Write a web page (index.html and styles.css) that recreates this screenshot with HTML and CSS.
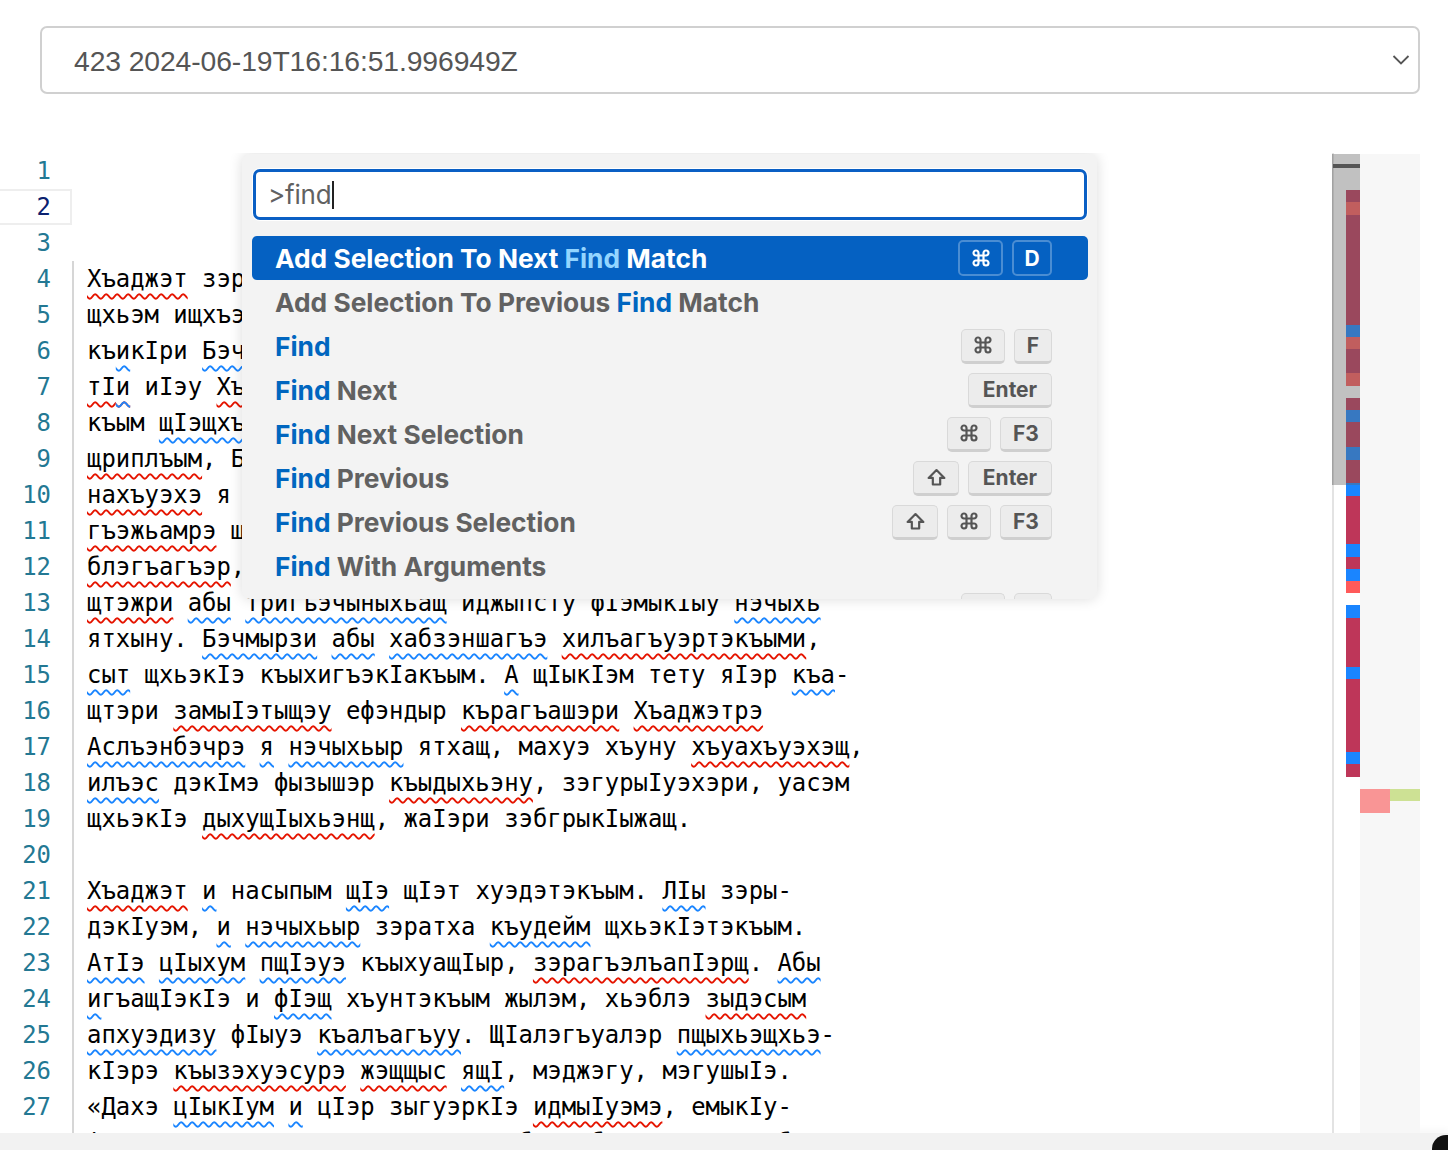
FILE: index.html
```html
<!DOCTYPE html>
<html lang="kbd">
<head>
<meta charset="utf-8">
<title>Editor</title>
<link rel="stylesheet" href="styles.css">
</head>
<body>
<div class="top">
  <div class="select">
    <span class="select-text">423 2024-06-19T16:16:51.996949Z</span>
    <svg class="chev" width="18" height="12" viewBox="0 0 18 12"><path d="M1.5 2 L9 9.5 L16.5 2" fill="none" stroke="#555" stroke-width="1.8"/></svg>
  </div>
</div>
<div class="workspace">
  <div class="editor">
    <div class="lines">
      <div class="row"><div class="ln">1</div><div class="code"></div></div>
      <div class="row cur"><div class="ln">2</div><div class="code"></div></div>
      <div class="row"><div class="ln">3</div><div class="code"></div></div>
      <div class="row"><div class="ln">4</div><div class="code g"><span class="r">Хъаджэт</span> зэрыхуэзэну щыта щIалэр Бэчмырзэ и къуэщ,</div></div>
      <div class="row"><div class="ln">5</div><div class="code g">щхьэм ищхъэрэу къэнат, ауэ Iуэхур зэпыуа хъуакъым.</div></div>
      <div class="row"><div class="ln">6</div><div class="code g">къ<span class="b">и</span>кIри <span class="b">Бэчмырзэ</span> и унэм щызэхуэсахэщ, жэщым</div></div>
      <div class="row"><div class="ln">7</div><div class="code g"><span class="r">тI<span class="b">и</span></span> иIэу <span class="r">Хъаджэт</span> и адэм и деж кIуахэщ. Абы</div></div>
      <div class="row"><div class="ln">8</div><div class="code g">къым <span class="b">щIэщхъуэрт</span>, ауэ зыри жимыIэу едаIуэрт.</div></div>
      <div class="row"><div class="ln">9</div><div class="code g"><span class="r">щриплъым</span>, Бэчмырзэ и гуращэр къыгуригъэIуащ,</div></div>
      <div class="row"><div class="ln">10</div><div class="code g"><span class="r">нахъуэхэ</span> я псалъэр зэтемыхуэу, ауэ унафэр</div></div>
      <div class="row"><div class="ln">11</div><div class="code g"><span class="r">гъэжьамрэ</span> щIалэмрэ я зэхуаку дэлъыр ягъэбыдэу</div></div>
      <div class="row"><div class="ln">12</div><div class="code g"><span class="r">блэгъагъэр</span>, жэщ-махуэ имыIэу Iуэхур ягъэкIуэтэн</div></div>
      <div class="row"><div class="ln">13</div><div class="code g"><span class="r">щтэжри</span> <span class="b">абы</span> <span class="b">тригъэчыныхьащ</span> иджыпсту фIэмыкIыу <span class="b">нэчыхь</span></div></div>
      <div class="row"><div class="ln">14</div><div class="code g">ятхыну. <span class="b">Бэчмырзи</span> <span class="b">абы</span> <span class="b">хабзэншагъэ</span> <span class="r">хилъагъуэртэкъыми</span>,</div></div>
      <div class="row"><div class="ln">15</div><div class="code g"><span class="b">сыт</span> щхьэкIэ къыхигъэкIакъым. <span class="b">А</span> щIыкIэм тету яIэр <span class="b">къа</span>-</div></div>
      <div class="row"><div class="ln">16</div><div class="code g">щтэри <span class="r">замыIэтыщэу</span> ефэндыр <span class="r">кърагъашэри</span> <span class="r">Хъаджэтрэ</span></div></div>
      <div class="row"><div class="ln">17</div><div class="code g"><span class="b">Аслъэнбэчрэ</span> <span class="b">я</span> <span class="b">нэчыхьыр</span> ятхащ, махуэ хъуну <span class="r">хъуахъуэхэщ</span>,</div></div>
      <div class="row"><div class="ln">18</div><div class="code g"><span class="b">илъэс</span> дэкIмэ фызышэр <span class="r">къыдыхьэну</span>, зэгурыIуэхэри, уасэм</div></div>
      <div class="row"><div class="ln">19</div><div class="code g">щхьэкIэ <span class="r">дыхущIыхьэнщ</span>, жаIэри зэбгрыкIыжащ.</div></div>
      <div class="row"><div class="ln">20</div><div class="code g"></div></div>
      <div class="row"><div class="ln">21</div><div class="code g"><span class="r">Хъаджэт</span> <span class="b">и</span> насыпым <span class="b">щIэ</span> щIэт хуэдэтэкъым. <span class="b">ЛIы</span> зэры-</div></div>
      <div class="row"><div class="ln">22</div><div class="code g">дэкIуэм, <span class="b">и</span> <span class="b">нэчыхьыр</span> зэратха <span class="b">къудейм</span> щхьэкIэтэкъым.</div></div>
      <div class="row"><div class="ln">23</div><div class="code g"><span class="b">АтIэ</span> <span class="b">цIыхум</span> <span class="b">пщIэуэ</span> къыхуащIыр, <span class="r">зэрагъэлъапIэрщ</span>. <span class="b">Абы</span></div></div>
      <div class="row"><div class="ln">24</div><div class="code g"><span class="b">и</span>гъащIэкIэ и <span class="b">фIэщ</span> хъунтэкъым жылэм, хьэблэ <span class="r">зыдэсым</span></div></div>
      <div class="row"><div class="ln">25</div><div class="code g"><span class="b">апхуэдизу</span> фIыуэ <span class="b">къалъагъуу</span>. ЩIалэгъуалэр <span class="b">пщыхьэщхьэ</span>-</div></div>
      <div class="row"><div class="ln">26</div><div class="code g">кIэрэ <span class="r">къызэхуэсурэ</span> <span class="r">жэщщыс</span> <span class="b">ящI</span>, мэджэгу, мэгушыIэ.</div></div>
      <div class="row"><div class="ln">27</div><div class="code g">«Дахэ <span class="b">цIыкIум</span> <span class="b">и</span> цIэр зыгуэркIэ <span class="r">идмыIуэмэ</span>, емыкIу-</div></div>
      <div class="row"><div class="ln">28</div><div class="code g">фIэкIа зыри жамыIэу щытащ, хьэблэр бгъэдэсу игъэбзэрт.</div></div>
    </div>

    <div class="scrollbar">
      <div class="marker crimson" style="top:37px;height:12px"></div>
      <div class="marker red" style="top:49px;height:13px"></div>
      <div class="marker crimson" style="top:62px;height:110px"></div>
      <div class="marker blue" style="top:172px;height:12px"></div>
      <div class="marker red" style="top:184px;height:12px"></div>
      <div class="marker crimson" style="top:196px;height:24px"></div>
      <div class="marker red" style="top:220px;height:13px"></div>
      <div class="marker crimson" style="top:245px;height:12px"></div>
      <div class="marker blue" style="top:257px;height:12px"></div>
      <div class="marker crimson" style="top:269px;height:25px"></div>
      <div class="marker blue" style="top:294px;height:13px"></div>
      <div class="marker crimson" style="top:307px;height:23px"></div>
      <div class="marker blue" style="top:330px;height:13px"></div>
      <div class="marker crimson" style="top:343px;height:48px"></div>
      <div class="marker blue" style="top:391px;height:13px"></div>
      <div class="marker crimson" style="top:404px;height:12px"></div>
      <div class="marker blue" style="top:416px;height:12px"></div>
      <div class="marker red" style="top:428px;height:12px"></div>
      <div class="marker blue" style="top:452px;height:13px"></div>
      <div class="marker crimson" style="top:465px;height:49px"></div>
      <div class="marker blue" style="top:514px;height:12px"></div>
      <div class="marker crimson" style="top:526px;height:73px"></div>
      <div class="marker blue" style="top:599px;height:12px"></div>
      <div class="marker crimson" style="top:611px;height:13px"></div>
      <div class="slider"><div class="cursor-mark"></div></div>
    </div>

    <div class="palette">
      <div class="quick-input">
        <span class="qi-text">&gt;find</span><span class="caret"></span>
      </div>
      <div class="list">
        <div class="item sel">
          <span class="label">Add Selection To Next <em>Find</em> Match</span>
          <span class="keys"><kbd class="k-cmd"><svg class="ic" viewBox="0 0 24 24"><path d="M9 9V6a3 3 0 1 0-3 3h3M15 9V6a3 3 0 1 1 3 3h-3M15 15v3a3 3 0 1 0 3-3h-3M9 15v3a3 3 0 1 1-3-3h3M9 9h6v6H9z"/></svg></kbd><kbd class="k-d">D</kbd></span>
        </div>
        <div class="item">
          <span class="label">Add Selection To Previous <em>Find</em> Match</span>
        </div>
        <div class="item">
          <span class="label"><em>Find</em></span>
          <span class="keys"><kbd class="k-cmd"><svg class="ic" viewBox="0 0 24 24"><path d="M9 9V6a3 3 0 1 0-3 3h3M15 9V6a3 3 0 1 1 3 3h-3M15 15v3a3 3 0 1 0 3-3h-3M9 15v3a3 3 0 1 1-3-3h3M9 9h6v6H9z"/></svg></kbd><kbd class="k-f">F</kbd></span>
        </div>
        <div class="item">
          <span class="label"><em>Find</em> Next</span>
          <span class="keys"><kbd class="k-enter">Enter</kbd></span>
        </div>
        <div class="item">
          <span class="label"><em>Find</em> Next Selection</span>
          <span class="keys"><kbd class="k-cmd"><svg class="ic" viewBox="0 0 24 24"><path d="M9 9V6a3 3 0 1 0-3 3h3M15 9V6a3 3 0 1 1 3 3h-3M15 15v3a3 3 0 1 0 3-3h-3M9 15v3a3 3 0 1 1-3-3h3M9 9h6v6H9z"/></svg></kbd><kbd class="k-f3">F3</kbd></span>
        </div>
        <div class="item">
          <span class="label"><em>Find</em> Previous</span>
          <span class="keys"><kbd class="k-shift"><svg class="ic" viewBox="0 0 24 24"><path d="M12 3.5L21 12.5H16.2V20H7.8V12.5H3Z"/></svg></kbd><kbd class="k-enter">Enter</kbd></span>
        </div>
        <div class="item">
          <span class="label"><em>Find</em> Previous Selection</span>
          <span class="keys"><kbd class="k-shift"><svg class="ic" viewBox="0 0 24 24"><path d="M12 3.5L21 12.5H16.2V20H7.8V12.5H3Z"/></svg></kbd><kbd class="k-cmd"><svg class="ic" viewBox="0 0 24 24"><path d="M9 9V6a3 3 0 1 0-3 3h3M15 9V6a3 3 0 1 1 3 3h-3M15 15v3a3 3 0 1 0 3-3h-3M9 15v3a3 3 0 1 1-3-3h3M9 9h6v6H9z"/></svg></kbd><kbd class="k-f3">F3</kbd></span>
        </div>
        <div class="item">
          <span class="label"><em>Find</em> With Arguments</span>
        </div>
        <div class="item">
          <span class="label"><em>Find</em> With Selection</span>
          <span class="keys"><kbd class="k-cmd"><svg class="ic" viewBox="0 0 24 24"><path d="M9 9V6a3 3 0 1 0-3 3h3M15 9V6a3 3 0 1 1 3 3h-3M15 15v3a3 3 0 1 0 3-3h-3M9 15v3a3 3 0 1 1-3-3h3M9 9h6v6H9z"/></svg></kbd><kbd class="k-f">E</kbd></span>
        </div>
      </div>
    </div>
  </div>
  <div class="side">
    <div class="deco pink"></div>
    <div class="deco green"></div>
  </div>
</div>
<div class="bottom"><div class="corner"></div></div>
</body>
</html>
```

FILE: styles.css
```css
html, body {
  margin: 0;
  padding: 0;
  background: #ffffff;
}
body {
  width: 1448px;
  height: 1150px;
  overflow: hidden;
  font-family: "Liberation Sans", Arial, sans-serif;
}

/* top select */
.top {
  padding: 26px 28px 0 40px;
  height: 153px;
  box-sizing: border-box;
}
.select {
  height: 68px;
  box-sizing: border-box;
  border: 2px solid #d0d0d0;
  border-radius: 7px;
  display: flex;
  align-items: center;
  justify-content: space-between;
  padding: 0 8px 0 32px;
  background: #fff;
}
.select-text {
  font-family: "Liberation Sans", Arial, sans-serif;
  font-size: 28.3px;
  color: #555;
  letter-spacing: -0.1px;
  margin-top: 2px;
}
.chev { display: block; }

/* workspace */
.workspace {
  display: flex;
  height: 980px;
  margin-right: 28px;
}
.editor {
  position: relative;
  flex: 1;
  overflow: hidden;
  background: #fff;
}
.lines {
  display: flex;
  flex-direction: column;
}
.row {
  display: flex;
  height: 36px;
  flex: none;
}
.ln {
  width: 72px;
  box-sizing: border-box;
  padding-right: 21px;
  text-align: right;
  font-family: "DejaVu Sans Mono", monospace;
  font-size: 23.9px;
  line-height: 36px;
  color: #237893;
}
.row.cur .ln {
  color: #0b216f;
  border: 2px solid #eeeeee;
  border-left: none;
  line-height: 32px;
  padding-right: 19px;
}
.code {
  flex: 1;
  padding-left: 15px;
  font-family: "DejaVu Sans Mono", monospace;
  font-size: 23.9px;
  line-height: 36px;
  color: #000;
  white-space: pre;
}
.code.g {
  border-left: 2px solid #d6d6d6;
  padding-left: 13px;
}
.r, .b {
  text-decoration-line: underline;
  text-decoration-style: wavy;
  text-decoration-thickness: 1.5px;
  text-underline-offset: 6px;
  text-decoration-skip-ink: none;
}
.r { text-decoration-color: #e51400; }
.b { text-decoration-color: #1a85ff; }

/* scrollbar / overview ruler */
.scrollbar {
  position: absolute;
  top: 0;
  right: 0;
  bottom: 0;
  width: 28px;
  box-shadow: inset 2px 0 0 #e3e3e3;
}
.marker {
  position: absolute;
  left: 14px;
  width: 14px;
}
.crimson { background: #be3659; }
.red { background: #ff5a5a; }
.blue { background: #1a85ff; }
.slider {
  position: absolute;
  top: 1px;
  left: 0;
  width: 28px;
  height: 331px;
  background: rgba(100, 100, 100, 0.4);
  box-shadow: inset 1px 0 0 rgba(0,0,0,0.08);
}
.cursor-mark {
  position: absolute;
  top: 10px;
  left: 1px;
  right: 0;
  height: 4px;
  background: #555;
}

/* side panel */
.side {
  position: relative;
  width: 60px;
  background: #f7f7f7;
  margin-top: 1px;
}
.deco { position: absolute; }
.deco.pink {
  left: 0;
  width: 30px;
  top: 635px;
  height: 24px;
  background: #f99595;
}
.deco.green {
  left: 30px;
  width: 30px;
  top: 635px;
  height: 12px;
  background: #cde194;
}

/* command palette */
.palette {
  position: absolute;
  left: 242px;
  top: 1px;
  width: 855px;
  height: 445px;
  box-sizing: border-box;
  padding: 15px 9px 0 10px;
  background: #f3f3f3;
  border-radius: 8px;
  box-shadow: 0 0 14px rgba(0, 0, 0, 0.14);
  overflow: hidden;
  font-family: Inter, "Liberation Sans", sans-serif;
}
.quick-input {
  height: 51px;
  box-sizing: border-box;
  border: 3px solid #0a5fc4;
  border-radius: 7px;
  background: #fff;
  box-shadow: 0 0 0 1px #fff;
  display: flex;
  align-items: center;
  padding-left: 12px;
  margin: 0 1px 0 1px;
}
.qi-text {
  font-size: 26px;
  color: #616161;
  letter-spacing: -0.2px;
}
.caret {
  width: 1.5px;
  height: 28px;
  background: #222;
  margin-left: 1px;
}
.list {
  margin-top: 16px;
  display: flex;
  flex-direction: column;
}
.item {
  height: 44px;
  flex: none;
  display: flex;
  align-items: center;
  justify-content: space-between;
  padding: 0 36px 0 23px;
  border-radius: 5px;
  font-weight: 700;
  font-size: 26.3px;
  color: #616161;
}
.item em {
  font-style: normal;
  color: #0066bf;
}
.item.sel {
  background: #0561c2;
  color: #fff;
}
.item.sel em {
  color: #93d5ff;
}
.keys {
  display: flex;
  gap: 9px;
}
kbd {
  font-family: Inter, "Liberation Sans", sans-serif;
  font-weight: 700;
  font-size: 21px;
  color: #555;
  height: 35px;
  box-sizing: border-box;
  padding: 0;
  display: flex;
  align-items: center;
  justify-content: center;
  background: #ececec;
  border: 1px solid #d9d9d9;
  border-bottom: 3px solid #cfcfcf;
  border-radius: 5px;
}
.ic {
  width: 20px;
  height: 20px;
  fill: none;
  stroke: currentColor;
  stroke-width: 2.6;
  stroke-linejoin: round;
  stroke-linecap: round;
  display: block;
}
kbd.k-shift .ic {
  width: 21px;
  height: 21px;
  stroke-width: 2.5;
}
kbd.k-cmd { width: 44px; }
kbd.k-shift { width: 46px; }
kbd.k-d { width: 40px; }
kbd.k-f { width: 38px; }
kbd.k-f3 { width: 52px; }
kbd.k-enter { width: 84px; }
.item.sel kbd {
  color: #fff;
  background: transparent;
  border: 2px solid rgba(255, 255, 255, 0.28);
  height: 36px;
}
.item.sel kbd.k-cmd { width: 45px; }

/* bottom strip */
.bottom {
  height: 17px;
  background: #f2f2f2;
  box-shadow: 0 -4px 6px rgba(0, 0, 0, 0.03);
  display: flex;
  justify-content: flex-end;
  align-items: flex-end;
}
.corner {
  width: 16px;
  height: 15px;
  background: #111;
  border-top-left-radius: 14px;
}
```
